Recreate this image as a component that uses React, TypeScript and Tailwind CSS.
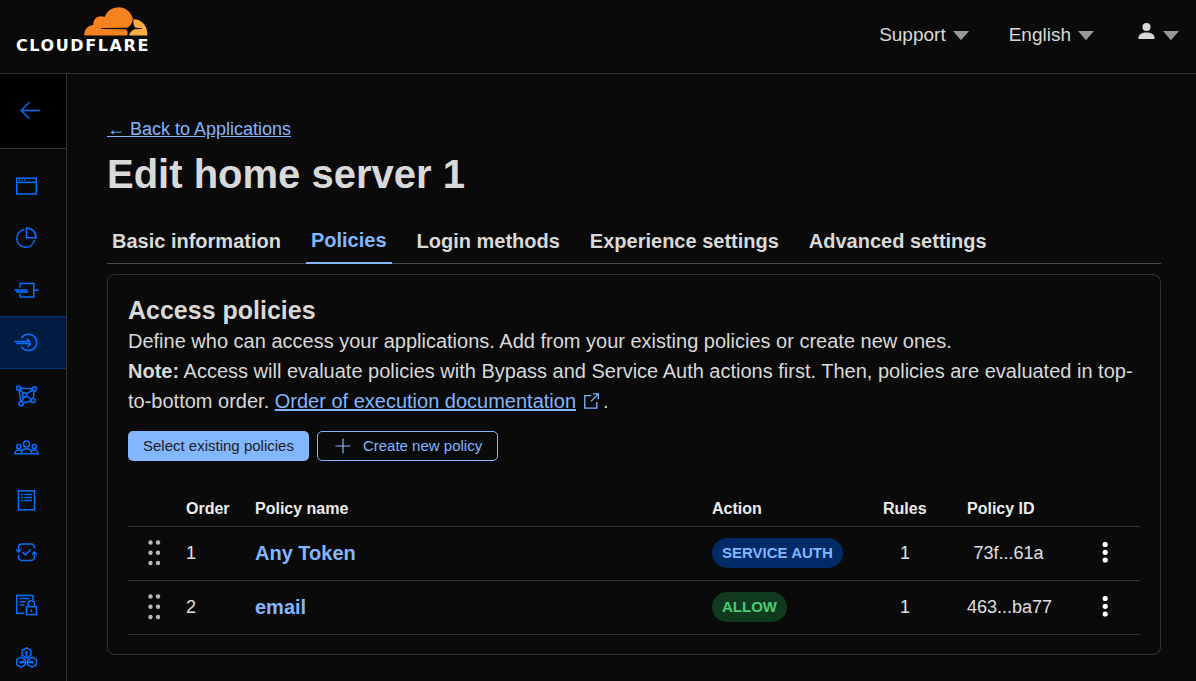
import type { ReactNode } from "react";

const Icon = ({ children }: { children: ReactNode }) => (
  <svg
    width="26"
    height="24"
    viewBox="0 0 26 24"
    fill="none"
    stroke="currentColor"
    strokeWidth="1.5"
    aria-hidden="true"
  >
    {children}
  </svg>
);

const navItems = [
  {
    label: "Overview",
    icon: (
      <Icon>
        <rect x="2.7" y="5.2" width="19.6" height="15.8" />
        <path d="M2.7 9.4h19.6" />
        <path d="M5 7.2h1.3M7.5 7.2h1.3M10 7.2h1.3" />
      </Icon>
    ),
  },
  {
    label: "Analytics",
    icon: (
      <Icon>
        <path d="M10.2 3.4a9 9 0 1 0 10.4 10.8" />
        <path d="M12.5 2v9.8h9.6a9.6 9.6 0 0 0-9.6-9.8z" />
      </Icon>
    ),
  },
  {
    label: "Gateway",
    icon: (
      <Icon>
        <path d="M6.2 9.5V5.5h13.6v13.4H6.2v-3.5" />
        <path d="M20 12.2h4.8M.4 12h12.8M2 14h12.2" />
        <path d="M2 13h12" strokeOpacity="0.5" />
      </Icon>
    ),
  },
  {
    label: "Access",
    icon: (
      <Icon>
        <path d="M7.4 8.2a8.2 8.2 0 1 1 0 8.4" />
        <path d="M.4 11.6h15.4M2.2 13.6h14.6" />
        <path d="M12.8 8.8l3.4 2.8M13.6 16.6l3.2-3" />
      </Icon>
    ),
  },
  {
    label: "Networks",
    icon: (
      <Icon>
        <g transform="translate(0 1.5)">
          <circle cx="4.6" cy="3.6" r="2.1" />
          <circle cx="20.4" cy="4.4" r="2.1" />
          <circle cx="19" cy="16" r="2.1" />
          <circle cx="7.1" cy="19.2" r="2.1" />
          <circle cx="10.6" cy="10.4" r="2.1" />
          <path d="M6.7 3.7l11.6.5M20.1 6.5l-.8 7.4M16.9 16.6l-7.8 2M6.8 17L4.9 5.7M5.9 5.3l3.5 3.4M12.5 9.4l6.1-3.9M12.4 11.5l4.8 3.4M9.8 12.4l-1.9 4.8" />
        </g>
      </Icon>
    ),
  },
  {
    label: "My Team",
    icon: (
      <Icon>
        <circle cx="12.5" cy="9" r="3.1" />
        <circle cx="4.8" cy="11.6" r="2.1" />
        <circle cx="20.3" cy="11.6" r="2.1" />
        <path d="M7.3 18.8c0-3 2-5 5.2-5s5.2 2 5.2 5zM7.3 18.8H.9c0-2.4 1.6-3.8 3.9-3.8 1.3 0 2.3.4 3 1.1M17.7 18.8h6.4c0-2.4-1.5-3.8-3.8-3.8-1.3 0-2.3.4-3 1.1" />
      </Icon>
    ),
  },
  {
    label: "Logs",
    icon: (
      <Icon>
        <rect x="4.5" y="2.8" width="16" height="19" />
        <path d="M7 6.6h2M7 9.6h2M7 12.6h2M10.4 6.6h7.6M10.4 9.6h7.6M10.4 12.6h7.6" />
      </Icon>
    ),
  },
  {
    label: "Device posture",
    icon: (
      <Icon>
        <path d="M4.6 11V7a3 3 0 0 1 3-3h9.8a3 3 0 0 1 3 3v1.6M20.4 12.5v4.9a3 3 0 0 1-3 3H7.6a3 3 0 0 1-3-3v-2.6" />
        <path d="M2.3 9.6l2.3 2.6 2.3-2.6M18.1 14.4l2.3-2.6 2.3 2.6M8.4 12l3 3 5.4-5.6" />
      </Icon>
    ),
  },
  {
    label: "DLP",
    icon: (
      <Icon>
        <g transform="translate(0 .6)">
          <path d="M19 7.4V2.8H2.7v17.8h7.6" />
          <path d="M5.6 6h9.8M5.6 9.2h6.2M5.6 12.4h4.8" />
          <rect x="12.4" y="14" width="10" height="8" />
          <path d="M14.2 14v-2.6a3.2 3.2 0 0 1 6.4 0V14M17.4 16.8v2.8" />
        </g>
      </Icon>
    ),
  },
  {
    label: "Integrations",
    icon: (
      <Icon>
        <g transform="translate(0 .6)">
          <path d="M12.5 2.2l4.3 2.5v5l-4.3 2.5-4.3-2.5v-5z" />
          <path d="M7 11.6l4.3 2.5v5L7 21.6l-4.3-2.5v-5z" />
          <path d="M18.1 11.6l4.3 2.5v5l-4.3 2.5-4.3-2.5v-5z" />
          <path d="M12.5 6.6v4.6M6.5 17l4-2.2M18.6 17l-4-2.2M8 16.8h9" />
          <circle cx="12.5" cy="7" r=".7" />
          <circle cx="7" cy="16.8" r=".7" />
          <circle cx="18.1" cy="16.8" r=".7" />
        </g>
      </Icon>
    ),
  },
];

const tabs = [
  "Basic information",
  "Policies",
  "Login methods",
  "Experience settings",
  "Advanced settings",
];

const policies = [
  { order: 1, name: "Any Token", action: "SERVICE AUTH", rules: 1, id: "73f...61a" },
  { order: 2, name: "email", action: "ALLOW", rules: 1, id: "463...ba77" },
];

const Caret = () => (
  <svg width="16" height="9" viewBox="0 0 16 9" aria-hidden="true">
    <path d="M0 0h16L8.6 8.6a.8.8 0 0 1-1.2 0z" fill="#999" />
  </svg>
);

const Logo = () => (
  <a href="#" className="flex w-[132px] flex-col items-end">
    <svg width="64" height="29" viewBox="0 0 64 29" aria-hidden="true">
      <path
        d="M.3 28.4C.1 22.6 4 18.3 9.3 18.1C8.6 12 14.5 7 20.5 10.1C23 4 28.5.3 34.5.3C41.5.3 47 5 48.9 11.5C48.6 15.5 46.5 19.5 43 20.8L17 21V22L41.5 22.3C43.5 23.3 44.2 25.8 43.2 28.4Z"
        fill="#f6821f"
      />
      <path
        d="M49.5 12.3C57 12.2 63.7 18 63.4 28.4H45C45.8 25.3 48 23.2 50.8 22.3L57.8 22V21L51.5 20.7C49.7 19.5 49 16 49.5 12.3Z"
        fill="#fbad41"
      />
    </svg>
    <span className="w-full font-['DejaVu_Sans'] text-base leading-5 font-bold tracking-widest text-white">
      CLOUDFLARE
    </span>
  </a>
);

const Header = () => (
  <header className="flex h-[74px] items-start justify-between border-b border-[#333] pr-[17px] pl-4">
    <div className="pt-[7px]">
      <Logo />
    </div>
    <div className="flex h-[70px] items-center text-[19px]">
      <button type="button" className="flex items-center gap-[7px]">
        Support <Caret />
      </button>
      <button type="button" className="ml-10 flex items-center gap-[7px]">
        English <Caret />
      </button>
      <button type="button" aria-label="Account" className="ml-11 flex items-center gap-2">
        <svg width="17" height="24" viewBox="0 0 17 24" fill="currentColor" aria-hidden="true">
          <circle cx="8.5" cy="4" r="4" />
          <path d="M.5 16v-1.500c0-3 3.5-5 8-5s8 2 8 5V16z" />
        </svg>
        <Caret />
      </button>
    </div>
  </header>
);

const Sidebar = () => (
  <aside className="w-[67px] shrink-0 border-r border-[#333] text-[#086fff]">
    <button
      type="button"
      aria-label="Back"
      className="flex h-[75px] w-full items-center border-b border-[#333] bg-black pl-5"
    >
      <svg width="21" height="20" viewBox="0 0 21 20" fill="none" stroke="currentColor" strokeWidth="1.4" aria-hidden="true">
        <path d="M20 9.5H1.5M9.5 1.3L1.2 9.5l8.3 8.2" />
      </svg>
    </button>
    <nav className="pt-2.5">
      <ul className="grid h-[524px] auto-rows-fr">
        {navItems.map((item) => (
          <li key={item.label}>
            <a
              href="#"
              aria-label={item.label}
              className={
                item.label === "Access"
                  ? "flex h-full items-center border-y border-[#003681] bg-[#001c43] pl-3.5"
                  : "flex h-full items-center pl-3.5"
              }
            >
              {item.icon}
            </a>
          </li>
        ))}
      </ul>
    </nav>
  </aside>
);

const DragHandle = () => (
  <svg width="14" height="26" viewBox="0 0 14 26" fill="#b9b9b9" aria-hidden="true">
    <circle cx="3.5" cy="2.5" r="2.2" />
    <circle cx="11" cy="2.5" r="2.2" />
    <circle cx="3.5" cy="12.8" r="2.2" />
    <circle cx="11" cy="12.8" r="2.2" />
    <circle cx="3.5" cy="23" r="2.2" />
    <circle cx="11" cy="23" r="2.2" />
  </svg>
);

const PolicyTable = () => (
  <table className="mt-8 w-full table-fixed text-left text-lg text-[#e0e0e0]">
    <thead>
      <tr className="h-[33px] border-b border-[#333] text-base text-[#ececec]">
        <th className="w-[58px]" aria-label="Reorder" />
        <th className="w-[69px]">Order</th>
        <th>Policy name</th>
        <th className="w-[171px]">Action</th>
        <th className="w-[84px]">Rules</th>
        <th className="w-[127px]">Policy ID</th>
        <th className="w-[46px]" aria-label="Menu" />
      </tr>
    </thead>
    <tbody>
      {policies.map((policy) => (
        <tr key={policy.order} className="h-[54px] border-b border-[#333]">
          <td className="pl-[19px]">
            <button type="button" aria-label="Drag" className="block">
              <DragHandle />
            </button>
          </td>
          <td>{policy.order}</td>
          <td>
            <a href="#" className="text-xl font-bold text-[#82b6ff]">
              {policy.name}
            </a>
          </td>
          <td>
            <span
              className={
                policy.action === "ALLOW"
                  ? "inline-block rounded-full bg-[#0f3a1e] px-2.5 align-middle text-[15px] leading-[30px] font-bold text-[#4ccb7a]"
                  : "inline-block rounded-full bg-[#002b66] px-2.5 align-middle text-[15px] leading-[30px] font-bold text-[#82b6ff]"
              }
            >
              {policy.action}
            </span>
          </td>
          <td className="pr-10 text-center">{policy.rules}</td>
          <td className="pr-11 text-center">{policy.id}</td>
          <td>
            <button type="button" aria-label="Policy actions" className="block pl-2">
              <svg width="6" height="22" viewBox="0 0 6 22" fill="#fff" aria-hidden="true">
                <circle cx="3.2" cy="2.5" r="2.6" />
                <circle cx="3.2" cy="10.3" r="2.6" />
                <circle cx="3.2" cy="18" r="2.6" />
              </svg>
            </button>
          </td>
        </tr>
      ))}
    </tbody>
  </table>
);

export default function App() {
  return (
    <div className="min-h-screen bg-[#0a0a0a] font-['Liberation_Sans',sans-serif] text-[#d9d9d9]">
      <Header />
      <div className="flex">
        <Sidebar />
        <main className="min-w-0 flex-1 pt-[43px] pr-[35px] pl-10">
          <a href="#" className="block w-fit text-lg leading-6 text-[#82b6ff] underline">
            ← Back to Applications
          </a>
          <h1 className="mt-2 text-[40px] leading-[50px] font-bold">Edit home server 1</h1>

          <div role="tablist" className="mt-5 flex gap-5 border-b border-[#4a4a4a] text-xl font-bold">
            {tabs.map((tab) => (
              <button
                key={tab}
                type="button"
                role="tab"
                aria-selected={tab === "Policies"}
                className={
                  tab === "Policies"
                    ? "-mb-px h-[45px] border-b-2 border-[#82b6ff] px-[5px] pb-px text-[#82b6ff]"
                    : "h-11 px-[5px]"
                }
              >
                {tab}
              </button>
            ))}
          </div>

          <section className="mt-2.5 rounded-lg border border-[#333] px-5 pt-5 pb-[19px]">
            <h2 className="text-[25px] leading-[31px] font-bold">Access policies</h2>
            <p className="text-xl leading-[30px]">
              Define who can access your applications. Add from your existing policies or create new ones.
            </p>
            <p className="text-xl leading-[30px]">
              <strong>Note:</strong> Access will evaluate policies with Bypass and Service Auth actions first. Then,
              policies are evaluated in top-to-bottom order.{" "}
              <a href="#" className="text-[#82b6ff]">
                <span className="underline">Order of execution documentation</span>
                <svg
                  className="mx-1 ml-2 inline-block align-[-1px]"
                  width="15"
                  height="16"
                  viewBox="0 0 15 16"
                  fill="none"
                  stroke="currentColor"
                  strokeWidth="1.3"
                  aria-hidden="true"
                >
                  <path d="M7 2.6H.8v12.6h12V9M9 .9h5.4v5.400M14.2 1.1L7 8.4" />
                </svg>
              </a>
              .
            </p>
            <div className="mt-[15px] flex gap-2 text-[15px]">
              <button type="button" className="h-[30px] rounded-[5px] bg-[#82b6ff] px-[15px] text-[#1d1d1d]">
                Select existing policies
              </button>
              <button
                type="button"
                className="flex h-[30px] items-center gap-3 rounded-[5px] border border-[#82b6ff] px-[15px] text-[#82b6ff]"
              >
                <svg width="18" height="16" viewBox="0 0 18 16" fill="none" stroke="currentColor" strokeWidth="1.2" aria-hidden="true">
                  <path d="M10 .5v15M2.5 8h15" />
                </svg>
                Create new policy
              </button>
            </div>
            <PolicyTable />
          </section>
        </main>
      </div>
    </div>
  );
}
